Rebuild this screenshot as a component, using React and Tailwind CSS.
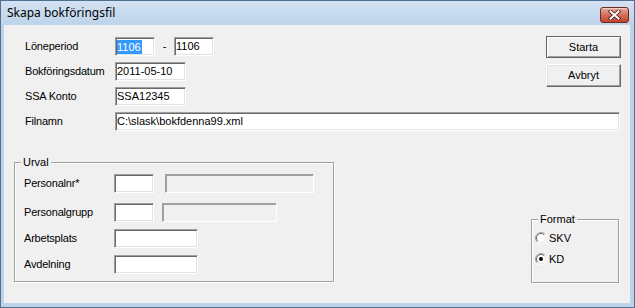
import React from 'react';

const sunken =
  'h-[19px] bg-white border-t border-l border-t-[#a0a0a0] border-l-[#a0a0a0] border-b border-r border-b-white border-r-white shadow-[inset_1px_1px_0_#696969,inset_-1px_-1px_0_#e3e3e3] pl-[1px] flex items-center text-[11px] leading-[13px] text-black whitespace-nowrap overflow-hidden';

const disabled =
  'h-[19px] bg-[#f0f0f0] border-t border-l border-t-[#a0a0a0] border-l-[#a0a0a0] border-b border-r border-b-white border-r-white shadow-[inset_1px_1px_0_#a0a0a0,inset_-1px_-1px_0_#f0f0f0]';

const Field = ({ className = '', children }) => (
  <div className={`${sunken} ${className}`}>{children}</div>
);

const Label = ({ children, w = 'w-[90px]' }) => (
  <div className={`${w} shrink-0 text-[11px] tracking-[-0.2px] text-black`}>{children}</div>
);

const GroupBox = ({ title, className = '', children }) => (
  <div className={`relative border border-[#a0a0a0] shadow-[inset_1px_1px_0_#fff,1px_1px_0_#fff] ${className}`}>
    <span className="absolute -top-[8px] left-[6px] bg-[#f0f0f0] px-[2px] text-[11px] leading-[14px] text-black">
      {title}
    </span>
    {children}
  </div>
);

const Radio = ({ checked }) => (
  <svg width="12" height="12" viewBox="0 0 12 12" className="shrink-0">
    <circle cx="6" cy="6" r="5" fill="#fff" />
    <path d="M2.1 9.9 A5.5 5.5 0 0 1 9.9 2.1" fill="none" stroke="#a0a0a0" strokeWidth="1" />
    <path d="M2.8 9.2 A4.5 4.5 0 0 1 9.2 2.8" fill="none" stroke="#696969" strokeWidth="1" />
    <path d="M9.9 2.1 A5.5 5.5 0 0 1 2.1 9.9" fill="none" stroke="#ffffff" strokeWidth="1" />
    <path d="M9.2 2.8 A4.5 4.5 0 0 1 2.8 9.2" fill="none" stroke="#e3e3e3" strokeWidth="1" />
    {checked && <circle cx="6" cy="6" r="2" fill="#000" />}
  </svg>
);

export default function App() {
  return (
    <div className="w-[635px] h-[308px] bg-[#bcd3ea] border border-[#52708f] flex flex-col font-['Liberation_Sans',Arial,sans-serif] overflow-hidden">
      {/* Title bar */}
      <div className="h-[24px] shrink-0 flex items-center justify-between pl-[6px] pr-[5px] bg-gradient-to-b from-[#d3e2f3] to-[#bcd3ea]">
        <span className="font-['Noto_Sans',sans-serif] text-[12px] text-black">Skapa bokföringsfil</span>
        <div className="w-[29px] h-[16px] mt-[4px] rounded-[3px] border border-[#6e2a22] bg-gradient-to-b from-[#e6a999] via-[#d3705c] to-[#c2432c] shadow-[inset_0_1px_0_rgba(255,255,255,0.45)] flex items-center justify-center">
          <svg width="13" height="10" viewBox="0 0 13 10">
            <path d="M2.5 1.5 L10.5 8.5 M10.5 1.5 L2.5 8.5" stroke="#4b1a12" strokeWidth="3.6" strokeLinecap="square" />
            <path d="M2.5 1.5 L10.5 8.5 M10.5 1.5 L2.5 8.5" stroke="#fff" strokeWidth="2" strokeLinecap="square" />
          </svg>
        </div>
      </div>

      {/* Client area */}
      <div className="ml-[3px] mr-[4px] h-[278px] bg-[#f0f0f0] flex flex-col">
        <div className="pt-[11px] pl-[21px] pr-[9px]">
          <div className="flex justify-between">
            <div className="flex flex-col pt-[1px]">
              <div className="flex items-center h-[19px]">
                <Label>Löneperiod</Label>
                <Field className="w-[40px]">
                  <span className="bg-[#3399ff] text-white leading-[14px] pr-[1px]">1106</span>
                </Field>
                <span className="w-[19px] text-center text-[11px] text-black">-</span>
                <Field className="w-[40px]">1106</Field>
              </div>
              <div className="flex items-center h-[19px] mt-[6px]">
                <Label>Bokföringsdatum</Label>
                <Field className="w-[71px]">2011-05-10</Field>
              </div>
              <div className="flex items-center h-[19px] mt-[6px]">
                <Label>SSA Konto</Label>
                <Field className="w-[71px]">SSA12345</Field>
              </div>
            </div>
            <div className="flex flex-col w-[75px]">
              <button className="h-[22px] border border-[#646464] bg-[#f0f0f0] shadow-[inset_1px_1px_0_#fff,inset_-1px_-1px_0_#a0a0a0] text-[11px] text-black">
                Starta
              </button>
              <button className="h-[23px] mt-[6px] border-t border-l border-t-white border-l-white border-b border-r border-b-[#696969] border-r-[#696969] bg-[#f0f0f0] shadow-[inset_-1px_-1px_0_#a0a0a0,inset_1px_1px_0_#e3e3e3] text-[11px] text-black">
                Avbryt
              </button>
            </div>
          </div>
          <div className="flex items-center h-[19px] mt-[6px] mr-[1px]">
            <Label>Filnamn</Label>
            <Field className="flex-1">C:\slask\bokfdenna99.xml</Field>
          </div>
        </div>

        <div className="flex justify-between items-start pl-[10px] pr-[11px] mt-[31px]">
          <GroupBox title="Urval" className="w-[320px] h-[120px] pl-[9px] pt-[11px]">
            <div className="flex items-center h-[19px]">
              <Label>Personalnr*</Label>
              <div className={`${sunken} w-[40px]`} />
              <div className={`${disabled} w-[149px] ml-[11px]`} />
            </div>
            <div className="flex items-center h-[19px] mt-[10px]">
              <Label>Personalgrupp</Label>
              <div className={`${sunken} w-[40px]`} />
              <div className={`${disabled} w-[115px] ml-[8px]`} />
            </div>
            <div className="flex items-center h-[19px] mt-[7px]">
              <Label>Arbetsplats</Label>
              <div className={`${sunken} w-[84px]`} />
            </div>
            <div className="flex items-center h-[19px] mt-[7px]">
              <Label>Avdelning</Label>
              <div className={`${sunken} w-[84px]`} />
            </div>
          </GroupBox>

          <GroupBox title="Format" className="w-[88px] h-[64px] mt-[57px] pl-[3px] pt-[11px]">
            <div className="flex items-center h-[14px] gap-[2px] text-[11px] text-black">
              <Radio />
              <span>SKV</span>
            </div>
            <div className="flex items-center h-[14px] gap-[2px] mt-[7px] text-[11px] text-black">
              <Radio checked />
              <span>KD</span>
            </div>
          </GroupBox>
        </div>
      </div>
    </div>
  );
}
